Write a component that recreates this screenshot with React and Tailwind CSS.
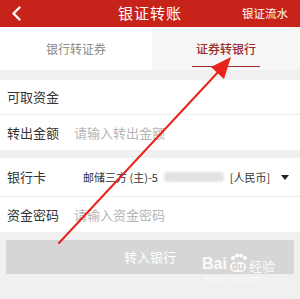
import React from "react";

const font = { fontFamily: '"Noto Sans CJK SC", "Noto Sans", sans-serif' };

function Row({ label, children, border = true }) {
  return (
    <div className={"flex items-center h-[35px] bg-white pl-[7px] " + (border ? "border-b border-[#ececec]" : "")}>
      <span className="text-[13px] text-[#333] w-[67px] shrink-0">{label}</span>
      {children}
    </div>
  );
}

export default function App() {
  return (
    <div className="relative w-[300px] h-[299px] overflow-hidden bg-[#f0f0f0]" style={font}>
      {/* header */}
      <div className="flex items-center h-[27px] bg-[#c8231a] text-white">
        <div className="w-[40px] pl-[11px] flex items-center">
          <svg width="11" height="15" viewBox="0 0 11 15">
            <path d="M8.5 1.5 L2.5 7.5 L8.5 13.5" stroke="white" strokeWidth="2.4" fill="none" strokeLinecap="round" strokeLinejoin="round" />
          </svg>
        </div>
        <div className="flex-1 text-center text-[15px] tracking-[1px] pl-[30px]">银证转账</div>
        <div className="w-[70px] text-[11.5px] pr-[12px] text-right">银证流水</div>
      </div>

      {/* tabs */}
      <div className="flex h-[43px]">
        <div className="w-[152px] bg-white flex items-center justify-center text-[12px] text-[#888]">银行转证券</div>
        <div className="flex-1 bg-[#f6f6f6] flex flex-col items-center justify-center relative">
          <span className="text-[12px] text-[#9c2b2b] font-medium">证券转银行</span>
          <div className="absolute bottom-[3px] left-[40px] w-[68px] h-[1.5px] bg-[#9c2b2b]" />
        </div>
      </div>
      <div className="h-[10px] bg-[#f0f0f0]" />

      <Row label="可取资金" />
      <Row label="转出金额" border={false}>
        <span className="text-[13px] text-[#b5b5b5]">请输入转出金额</span>
      </Row>
      <div className="h-[8px] bg-[#f0f0f0]" />
      <div className="flex items-center h-[39px] bg-white pl-[7px] border-b border-[#ececec]">
        <span className="text-[13px] text-[#333] w-[76px] shrink-0">银行卡</span>
        <span className="text-[11px] text-[#333]">邮储三方 (主)-5</span>
        <span className="w-[60px] h-[10px] bg-[#e2e2e2] ml-[6px] mr-[6px] rounded-sm blur-[1px]" />
        <span className="text-[11px] text-[#333]">[人民币]</span>
        <svg className="ml-[11px]" width="8" height="5" viewBox="0 0 8 5">
          <path d="M0 0 L8 0 L4 5 Z" fill="#222" />
        </svg>
      </div>
      <Row label="资金密码" border={false}>
        <span className="text-[13px] text-[#b5b5b5]">请输入资金密码</span>
      </Row>

      <div className="px-[6px] pt-[8px]">
        <div className="h-[34px] bg-[#d6d6d6] flex items-center justify-center text-white text-[13px]">转入银行</div>
      </div>

      {/* watermark */}
      <div className="absolute left-[202px] top-[253px] flex flex-col items-start text-white/85">
        <div className="flex items-end leading-none">
          <span className="text-[16px] font-bold" style={{ fontFamily: '"Liberation Sans", sans-serif' }}>Bai</span>
          <span className="relative flex flex-col items-center mx-[1px]">
            <svg width="20" height="9" viewBox="0 0 20 9">
              <circle cx="5" cy="5" r="2" fill="white" />
              <circle cx="9" cy="2.5" r="2" fill="white" />
              <circle cx="13" cy="2.5" r="2" fill="white" />
              <circle cx="17" cy="5" r="2" fill="white" />
            </svg>
            <span className="text-[10px] font-bold text-[#ccc] bg-white/85 rounded-[5px] px-[2px] leading-[10px]" style={{ fontFamily: '"Liberation Sans", sans-serif' }}>du</span>
          </span>
          <span className="text-[13px]" style={font}>经验</span>
        </div>
        <span className="text-[7px] text-white/70 mt-[2px] ml-[3px]" style={{ fontFamily: '"Liberation Sans", sans-serif' }}>jingyan.baidu.com</span>
      </div>

      {/* annotation arrow */}
      <svg className="absolute left-0 top-0 pointer-events-none" width="300" height="299" viewBox="0 0 300 299">
        <line x1="59" y1="243" x2="220" y2="70" stroke="#e8231c" strokeWidth="2" strokeLinecap="round" />
        <path d="M231 57 L211 67 L224 79 Z" fill="#e8231c" />
      </svg>
    </div>
  );
}
